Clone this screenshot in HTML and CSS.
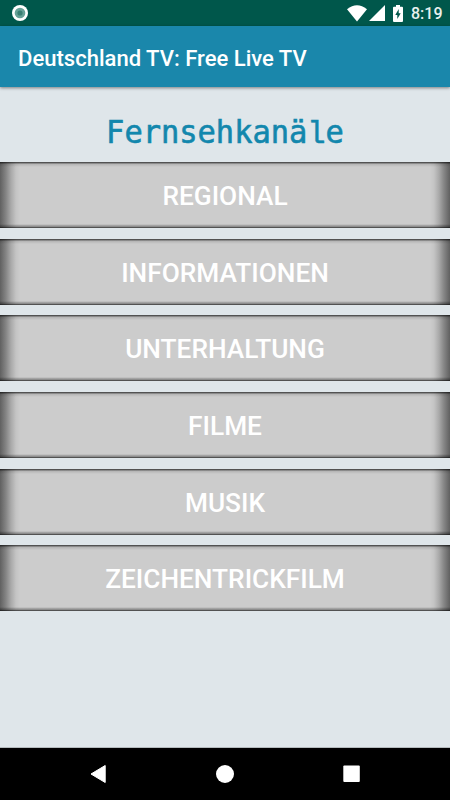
FILE: index.html
```html
<!DOCTYPE html>
<html lang="de">
<head>
<meta charset="utf-8">
<title>Deutschland TV: Free Live TV</title>
<link rel="stylesheet" href="styles.css">
</head>
<body>
<div class="screen">
  <header class="status">
    <svg class="notice" width="16" height="16" viewBox="0 0 16 16"><circle cx="8" cy="8" r="8" fill="#fff"/><circle cx="8" cy="8" r="5.3" fill="#66a197"/><circle cx="8" cy="8" r="2.6" fill="#397f73"/></svg>
    <svg class="wifi" width="20" height="17" viewBox="0 0 20 17"><path d="M0 4.2Q10-3.8 20 4.2L10 16.5Z" fill="#fff"/></svg>
    <svg class="signal" width="16" height="16" viewBox="0 0 16 16"><path d="M0 16L16 0V16Z" fill="#fff"/></svg>
    <svg class="battery" width="10" height="17" viewBox="0 0 10 17"><path d="M1 1.7H3V0H7V1.7H9Q10 1.7 10 2.7V16Q10 17 9 17H1Q0 17 0 16V2.7Q0 1.7 1 1.7Z" fill="#fff"/><path d="M5.7 4V8.3H7.7L4.3 14V10H2.3Z" fill="#00574b"/></svg>
    <span class="time">8:19</span>
  </header>
  <div class="appbar">Deutschland TV: Free Live TV</div>
  <main class="content">
    <h1 class="heading">Fernsehkanä<span class="slab">l</span>e</h1>
    <div class="list">
      <button class="channel">REGIONAL</button>
      <button class="channel">INFORMATIONEN</button>
      <button class="channel">UNTERHALTUNG</button>
      <button class="channel">FILME</button>
      <button class="channel">MUSIK</button>
      <button class="channel">ZEICHENTRICKFILM</button>
    </div>
  </main>
  <nav class="navbar">
    <svg width="18" height="20" viewBox="0 0 18 20"><path d="M1 10L15.2 1.5V18.5Z" fill="#fff" stroke="#fff" stroke-linejoin="round"/></svg>
    <svg width="18" height="20" viewBox="0 0 18 20"><circle cx="9" cy="10" r="9" fill="#fff"/></svg>
    <svg width="18" height="20" viewBox="0 0 18 20"><rect x="1.3" y="1.5" width="16.5" height="16.5" rx="1" fill="#fff"/></svg>
  </nav>
</div>
</body>
</html>
```
FILE: styles.css
```css
* { box-sizing: border-box; }
body { margin: 0; font-family: Roboto, sans-serif; }
.screen { width: 450px; height: 800px; display: flex; flex-direction: column; background: #dfe6ea; overflow: hidden; }
.status { height: 26px; flex: none; display: flex; align-items: flex-start; padding: 5px 8px 0 12px; background: #00574b; color: #fff; }
.notice { margin-right: auto; }
.wifi { margin-right: 2px; }
.signal { margin-right: 8px; }
.battery { margin-right: 8px; }
.time { width: 31px; font-size: 16px; font-weight: 500; line-height: 18px; color: #e9f1ef; white-space: nowrap; }
.appbar { height: 61px; flex: none; padding: 3px 0 0 18px; background: #1a87ab; color: #fff; font-size: 22.05px; font-weight: 500; line-height: 60px; box-shadow: 0 1px 3px rgba(0,0,0,.45); }
.content { flex: 1; min-height: 0; border-bottom: 1px solid #b4babd; }
.heading { margin: 0; height: 75px; padding-top: 7px; text-align: center; font: 400 30.4px/75px "DejaVu Sans Mono", monospace; color: #1287ad; -webkit-text-stroke: .6px #1287ad; transform: scaleY(1.05); }
.slab { display: inline-block; line-height: 1; font-family: "Liberation Mono", monospace; -webkit-text-stroke-width: .5px; }
.list { display: flex; flex-direction: column; gap: 10.7px; }
.channel { width: 100%; height: 66px; padding: 2px 0 0; border: 0; color: #fff; font: 500 26.25px Roboto, sans-serif;
  background:
    linear-gradient(to bottom, rgba(0,0,0,.6) 1px, rgba(0,0,0,.32) 1px, rgba(0,0,0,.32) 2px, rgba(0,0,0,.12) 2px, rgba(0,0,0,.04) 4px, transparent 5px, transparent calc(100% - 4px), rgba(0,0,0,.12) calc(100% - 3px), rgba(0,0,0,.28) calc(100% - 2px), rgba(0,0,0,.34) calc(100% - 1px), rgba(0,0,0,.6) calc(100% - 1px)),
    linear-gradient(to right, #606060 0, #858585 6px, #a9a9a9 11px, #c4c4c4 16px, #ccc 20px, #ccc calc(100% - 20px), #c4c4c4 calc(100% - 16px), #a9a9a9 calc(100% - 11px), #858585 calc(100% - 6px), #606060 100%); }
.navbar { height: 52px; flex: none; display: flex; justify-content: space-between; align-items: center; padding: 0 90px; background: #000; }
```
